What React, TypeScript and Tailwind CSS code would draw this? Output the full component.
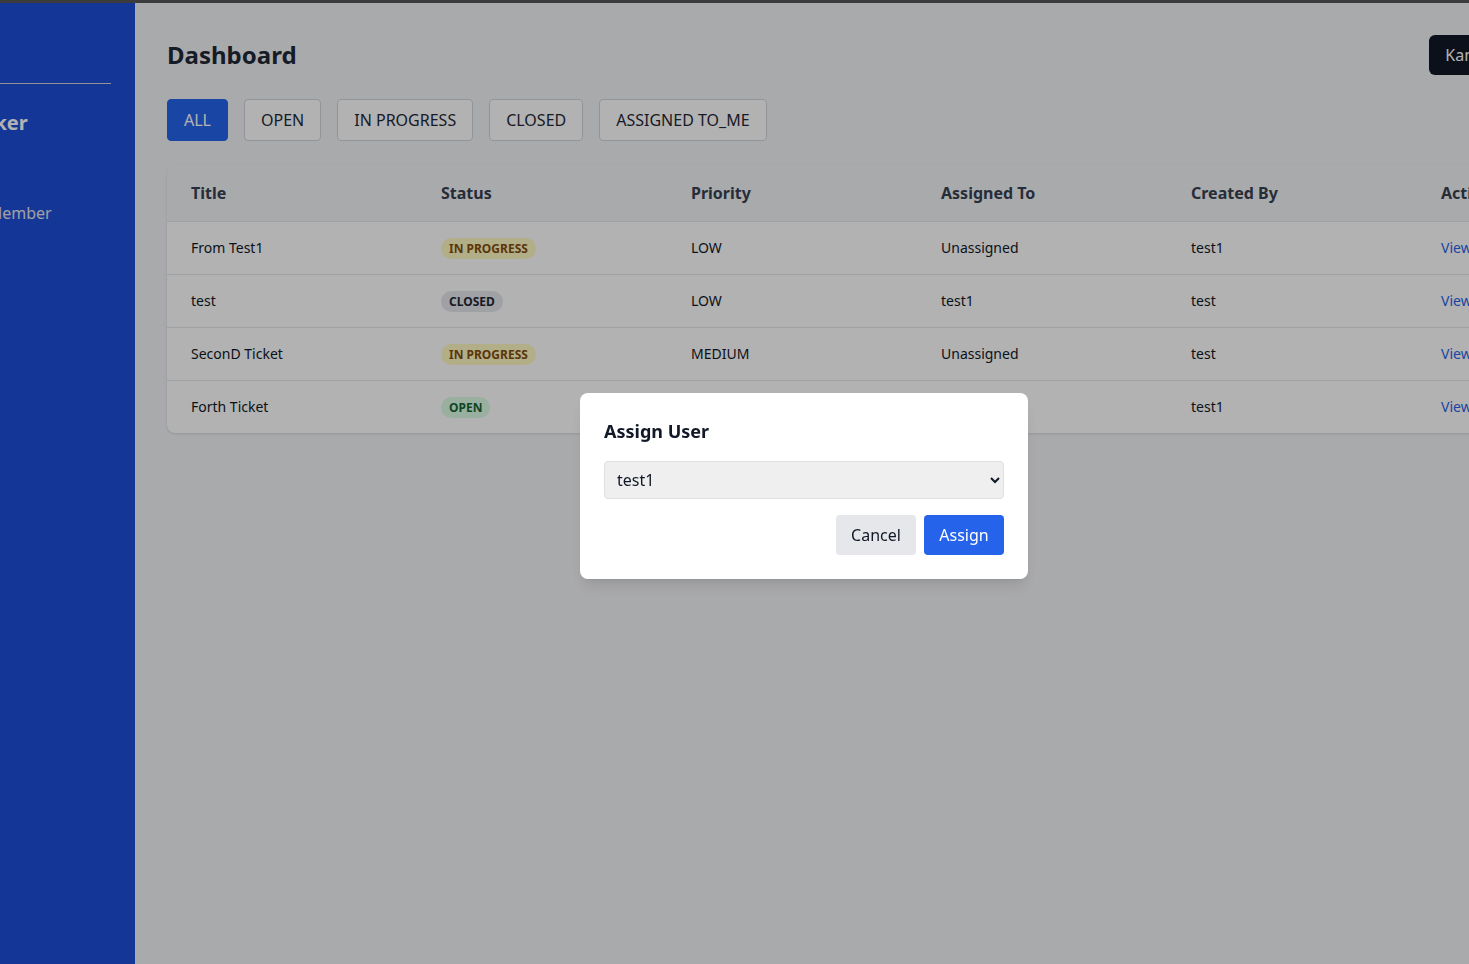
import { useState } from 'react';

type Ticket = {
  title: string;
  status: 'OPEN' | 'IN_PROGRESS' | 'CLOSED';
  priority: string;
  assignedTo: string;
  createdBy: string;
};

const tickets: Ticket[] = [
  { title: 'From Test1', status: 'IN_PROGRESS', priority: 'LOW', assignedTo: 'Unassigned', createdBy: 'test1' },
  { title: 'test', status: 'CLOSED', priority: 'LOW', assignedTo: 'test1', createdBy: 'test' },
  { title: 'SeconD Ticket', status: 'IN_PROGRESS', priority: 'MEDIUM', assignedTo: 'Unassigned', createdBy: 'test' },
  { title: 'Forth Ticket', status: 'OPEN', priority: 'HIGH', assignedTo: 'test1', createdBy: 'test1' },
];

const filters = ['ALL', 'OPEN', 'IN PROGRESS', 'CLOSED', 'ASSIGNED TO_ME'];

function StatusBadge({ status }: { status: Ticket['status'] }) {
  if (status === 'IN_PROGRESS') {
    return <span className="px-2 py-0.5 rounded-full text-xs font-bold bg-[#fef9c3] text-[#854d0e]">IN PROGRESS</span>;
  }
  if (status === 'CLOSED') {
    return <span className="px-2 py-0.5 rounded-full text-xs font-bold bg-[#e5e7eb] text-[#1f2937]">CLOSED</span>;
  }
  return <span className="px-2 py-0.5 rounded-full text-xs font-bold bg-[#dcfce7] text-[#166534]">OPEN</span>;
}

export default function App() {
  const [filter, setFilter] = useState('ALL');
  const [assignee, setAssignee] = useState('test1');

  return (
    <div className="w-screen h-screen overflow-hidden flex flex-col bg-[#f3f4f6] font-['Noto_Sans',sans-serif]">
      <div className="h-[3px] shrink-0 bg-[#575757]" />
      <div className="flex flex-1 -ml-[121px]">
        {/* Sidebar */}
        <aside className="w-64 shrink-0 bg-[#1d4ed8] text-white">
          <div className="mx-6 pt-[80px] border-b border-[#d1d5db]" />
          <h1 className="pl-4 mt-[25px] text-xl font-bold leading-7">Issue Tracker</h1>
          <p className="pl-[9px] mt-[64px] text-base text-[#e5e7eb]">Logged in as Member</p>
        </aside>

        {/* Main */}
        <main className="w-[1455px] shrink-0 p-8">
          <div className="flex justify-between items-center mb-6">
            <h2 className="text-2xl font-bold text-[#1f2937]">Dashboard</h2>
            <button className="px-4 py-2 rounded-md bg-[#111827] text-white">Kanban View</button>
          </div>

          <div className="flex gap-4 mb-6">
            {filters.map((f) => (
              <button
                key={f}
                onClick={() => setFilter(f)}
                className={`px-4 py-2 rounded border ${
                  filter === f ? 'bg-[#2563eb] border-[#2563eb] text-white' : 'bg-white border-[#d1d5db] text-[#1f2937]'
                }`}
              >
                {f}
              </button>
            ))}
          </div>

          <div className="bg-white rounded-lg shadow overflow-hidden">
            <table className="w-[1500px] table-fixed text-left">
              <thead className="bg-[#f3f4f6]">
                <tr className="border-b border-[#e5e7eb]">
                  {['Title', 'Status', 'Priority', 'Assigned To', 'Created By', 'Actions'].map((h) => (
                    <th key={h} className="w-[250px] px-6 py-4 font-bold text-[#374151]">{h}</th>
                  ))}
                </tr>
              </thead>
              <tbody>
                {tickets.map((t, i) => (
                  <tr key={i} className="border-b border-[#e5e7eb] last:border-b-0 text-sm text-[#111827]">
                    <td className="px-6 py-4">{t.title}</td>
                    <td className="px-6 py-4"><StatusBadge status={t.status} /></td>
                    <td className="px-6 py-4">{t.priority}</td>
                    <td className="px-6 py-4">{t.assignedTo}</td>
                    <td className="px-6 py-4">{t.createdBy}</td>
                    <td className="px-6 py-4 text-[#2563eb]">View</td>
                  </tr>
                ))}
              </tbody>
            </table>
          </div>
        </main>
      </div>

      {/* Assign modal */}
      <div className="fixed inset-0 bg-black/30 flex items-center justify-center pl-[139px] pt-[7px]">
        <div className="w-[448px] bg-white rounded-lg shadow-lg p-6">
          <h3 className="text-lg font-bold text-[#111827] mb-4">Assign User</h3>
          <select
            value={assignee}
            onChange={(e) => setAssignee(e.target.value)}
            className="w-full h-[38px] px-2 rounded border border-[#e0e0e0] bg-[#efefef] text-base text-[#111827]"
          >
            <option value="test1">test1</option>
            <option value="test">test</option>
          </select>
          <div className="flex justify-end gap-2 mt-4">
            <button className="w-20 py-2 rounded bg-[#e5e7eb] text-[#111827]">Cancel</button>
            <button className="w-20 py-2 rounded bg-[#2563eb] text-white">Assign</button>
          </div>
        </div>
      </div>
    </div>
  );
}
